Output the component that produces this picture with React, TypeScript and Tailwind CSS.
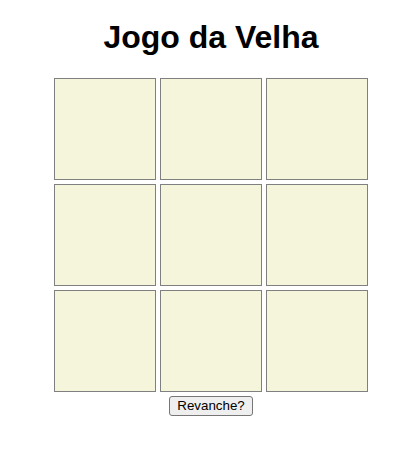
const cells = Array.from({ length: 9 }, (_, i) => i);

export default function App() {
  return (
    <div className="flex min-h-[458px] flex-col items-center bg-white pl-[3px] font-['Liberation_Sans',Arial,sans-serif] text-black">
      <h1 className="mt-[19px] text-[32px] font-bold leading-[37px]">Jogo da Velha</h1>

      <div className="mt-[22px] grid grid-cols-[repeat(3,102px)] gap-[4px]">
        {cells.map((c) => (
          <button
            key={c}
            className="h-[102px] w-[102px] border border-[#808080] bg-[#f5f5dc]"
          />
        ))}
      </div>

      <button className="mt-[4px] rounded-[3px] border border-[#767676] bg-[#efefef] px-[7px] py-[1px] text-[13.33px] leading-[16px] text-black">
        Revanche?
      </button>
    </div>
  );
}
